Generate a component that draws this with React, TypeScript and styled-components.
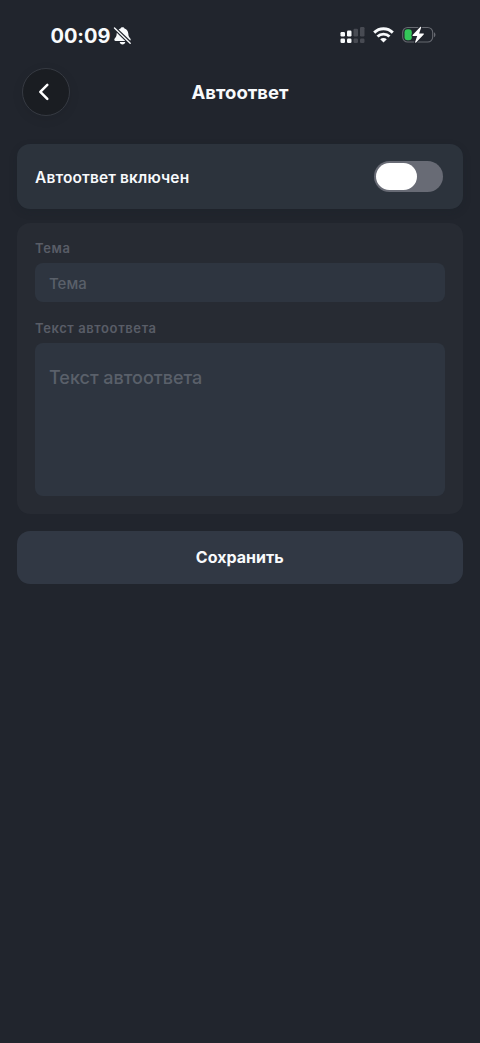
import React, { useState } from 'react';
import styled, { createGlobalStyle } from 'styled-components';

const GlobalStyle = createGlobalStyle`
  * { box-sizing: border-box; }
  html, body { margin: 0; background: #21252d; }
  body, button, input, textarea { font-family: Inter, "Liberation Sans", sans-serif; }
`;

const Screen = styled.div`
  min-height: 1043px;
  display: flex;
  flex-direction: column;
  background: #21252d;
  color: #f8fafc;
`;

const StatusBar = styled.div`
  height: 67px;
  padding: 4px 44px 0 50.5px;
  display: flex;
  align-items: center;
  justify-content: space-between;
`;

const Clock = styled.div`
  display: flex;
  align-items: center;
  gap: 3px;
  font-size: 20px;
  line-height: 24px;
  font-weight: 700;
  letter-spacing: -0.05px;
`;

const Indicators = styled.div`
  display: flex;
  align-items: center;
  gap: 8px;
  padding-bottom: 1px;
`;

const Header = styled.header`
  height: 49px;
  padding: 0 22px;
  display: grid;
  grid-template-columns: 48px 1fr 48px;
  align-items: center;
`;

const BackButton = styled.button`
  width: 48px;
  height: 48px;
  padding: 0;
  display: flex;
  align-items: center;
  justify-content: center;
  border: 1px solid #363a42;
  border-radius: 50%;
  background: #1a1d22;
  color: #fff;
  box-shadow: 0 3px 12px rgba(0, 0, 0, 0.08);
`;

const Title = styled.h1`
  margin: 0;
  padding-top: 1px;
  text-align: center;
  font-size: 18.5px;
  line-height: 24px;
  font-weight: 700;
`;

const Content = styled.main`
  padding: 28px 17.5px 0 17px;
  display: flex;
  flex-direction: column;
`;

const ToggleCard = styled.section`
  height: 65px;
  padding: 0 20px 0 18px;
  display: flex;
  align-items: center;
  justify-content: space-between;
  border-radius: 13px;
  background: #2c333c;
  box-shadow: 0 3px 8px rgba(20, 30, 36, 0.16);
`;

const ToggleLabel = styled.span`
  padding-top: 2px;
  font-size: 15.5px;
  line-height: 20px;
  font-weight: 600;
  letter-spacing: 0.13px;
`;

const Switch = styled.button<{ $on: boolean }>`
  width: 69px;
  height: 31px;
  padding: 2px;
  display: flex;
  justify-content: ${({ $on }) => ($on ? 'flex-end' : 'flex-start')};
  border: 0;
  border-radius: 16px;
  background: ${({ $on }) => ($on ? '#34c759' : '#686b75')};
`;

const Thumb = styled.span`
  width: 41px;
  height: 27px;
  border-radius: 14px;
  background: #fff;
`;

const FormCard = styled.section`
  height: 291px;
  margin-top: 14px;
  padding: 15px 17.5px 0 18px;
  display: flex;
  flex-direction: column;
  border-radius: 13px;
  background: #272b33;
`;

const FieldLabel = styled.label`
  height: 20px;
  margin-bottom: 5px;
  font-size: 13px;
  line-height: 20px;
  font-weight: 600;
  letter-spacing: 0.6px;
  color: #595d67;
`;

const TextInput = styled.input`
  width: 100%;
  height: 39px;
  margin-bottom: 16px;
  padding: 1px 14px 0;
  border: 0;
  border-radius: 8px;
  outline: 0;
  background: #2e3540;
  color: #f8fafc;
  font-size: 15px;
  font-weight: 500;
  &::placeholder { color: #5a606a; opacity: 1; }
`;

const TextBody = styled.textarea`
  width: 100%;
  height: 153px;
  padding: 22px 14px;
  border: 0;
  border-radius: 8px;
  outline: 0;
  resize: none;
  background: #2e3540;
  color: #f8fafc;
  font-size: 18px;
  font-weight: 500;
  line-height: 25px;
  &::placeholder { color: #5a606a; opacity: 1; }
`;

const SaveButton = styled.button`
  height: 53px;
  margin-top: 17px;
  padding: 0 0 1px;
  border: 0;
  border-radius: 13px;
  background: #313844;
  color: #f8fafc;
  font-size: 16px;
  line-height: 20px;
  font-weight: 700;
`;

const MutedBell = () => (
  <svg width="19" height="20" viewBox="0 0 19 20">
    <path d="M9.500 1.200c1 0 1.700.5 2 1.300 2.400.8 3.700 2.700 3.800 5.100.1 2.500.8 3.700 2 4.900.8.900.4 2.400-.9 2.400H2.600c-1.300 0-1.700-1.500-.9-2.400 1.200-1.200 1.900-2.400 2-4.900C3.800 5.200 5.100 3.300 7.500 2.500c.3-.8 1-1.300 2-1.300ZM6.700 16h5.600c-.2 1.500-1.300 2.400-2.800 2.400S6.900 17.500 6.700 16Z" fill="#f8fafc" />
    <path d="m1.500 2 15.700 15.200" stroke="#21252d" strokeWidth="3.800" />
    <path d="m1.500 2 15.700 15.200" stroke="#f8fafc" strokeWidth="1.400" strokeLinecap="round" />
  </svg>
);

const Signal = () => (
  <svg width="25" height="18" viewBox="0 0 25 18">
    <g fill="#f8fafc">
      <rect x="0.500" y="6" width="4.500" height="4.500" rx="1.200" />
      <rect x="7" y="4.500" width="4.500" height="6" rx="1.200" />
      <rect x="0.500" y="12.500" width="4.500" height="4.500" rx="1.200" />
      <rect x="7" y="12.500" width="4.500" height="4.500" rx="1.200" />
    </g>
    <g fill="#484b53">
      <rect x="13.500" y="2.800" width="4.500" height="7.700" rx="1.200" />
      <rect x="20" y="1" width="4.500" height="9.500" rx="1.200" />
      <rect x="13.500" y="12.500" width="4.500" height="4.500" rx="1.200" />
      <rect x="20" y="12.500" width="4.500" height="4.500" rx="1.200" />
    </g>
  </svg>
);

const Wifi = () => (
  <svg width="21" height="16" viewBox="0 0 21 16" fill="none" stroke="#f8fafc" strokeWidth="2.900">
    <path d="M1.200 5.600c5.200-5.200 13.400-5.200 18.600 0" />
    <path d="M4.500 9.500c3.300-3.200 8.700-3.200 12 0" />
    <path d="M10.500 15.500 7.200 12.300c1.900-1.600 4.700-1.600 6.600 0Z" fill="#f8fafc" stroke="none" />
  </svg>
);

const Battery = () => (
  <svg width="34" height="18" viewBox="0 0 34 18">
    <rect x="0.700" y="1.500" width="30" height="14.500" rx="5" fill="none" stroke="#676a71" strokeWidth="1.100" />
    <path d="M32 6.300c1.900.8 1.900 4.200 0 5Z" fill="#676a71" />
    <rect x="2.500" y="3.300" width="7.300" height="10.900" rx="3" fill="#34c759" />
    <path d="M18.200.900 10.600 9c-.4.400-.1.900.4.900h4.200l-2.100 6c-.2.700.5 1.100 1 .6l7.600-8.100c.4-.4.100-.9-.4-.9h-4.200l2.100-6c.2-.7-.5-1.100-1-.6Z" fill="#fff" stroke="#21252d" strokeWidth="2" paintOrder="stroke" />
  </svg>
);

const App: React.FC = () => {
  const [enabled, setEnabled] = useState(false);
  return (
    <>
      <GlobalStyle />
      <Screen>
        <StatusBar>
          <Clock>
            <span>00:09</span>
            <MutedBell />
          </Clock>
          <Indicators>
            <Signal />
            <Wifi />
            <Battery />
          </Indicators>
        </StatusBar>
        <Header>
          <BackButton aria-label="Назад">
            <svg width="20" height="20" viewBox="0 0 20 20" fill="none" stroke="currentColor" strokeWidth="2.500" strokeLinecap="round" strokeLinejoin="round">
              <path d="m11.300 2.800-7 7 7 7" />
            </svg>
          </BackButton>
          <Title>Автоответ</Title>
        </Header>
        <Content>
          <ToggleCard>
            <ToggleLabel>Автоответ включен</ToggleLabel>
            <Switch $on={enabled} role="switch" aria-checked={enabled} onClick={() => setEnabled(!enabled)}>
              <Thumb />
            </Switch>
          </ToggleCard>
          <FormCard>
            <FieldLabel htmlFor="subject">Тема</FieldLabel>
            <TextInput id="subject" placeholder="Тема" />
            <FieldLabel htmlFor="message">Текст автоответа</FieldLabel>
            <TextBody id="message" placeholder="Текст автоответа" />
          </FormCard>
          <SaveButton>Сохранить</SaveButton>
        </Content>
      </Screen>
    </>
  );
};

export default App;
